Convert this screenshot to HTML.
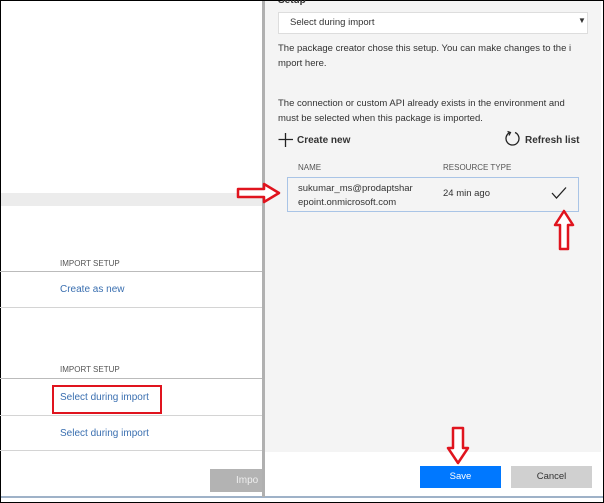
<!DOCTYPE html>
<html><head><style>
body{margin:0;width:604px;height:503px;overflow:hidden;background:#fff;font-family:"Liberation Sans",sans-serif;position:relative}
.a{position:absolute}
.t{position:absolute;font-size:10px;color:#333;white-space:nowrap}
.h{font-size:8px;color:#555}
.l{color:#3a6fb0;font-size:10px}
.hr{position:absolute;left:0;width:262px;height:1px;background:#d4d4d4}
</style></head><body>
<div class="a" style="left:0;top:0;border:1px solid #000;box-sizing:border-box;width:604px;height:503px"></div>
<div class="a" style="left:1px;top:193px;width:261px;height:13px;background:#ececec"></div>
<div class="t h" style="left:60px;top:259px">IMPORT SETUP</div>
<div class="hr" style="top:271px;background:#bbb"></div>
<div class="t l" style="left:60px;top:284px">Create as new</div>
<div class="hr" style="top:307px"></div>
<div class="t h" style="left:60px;top:365px">IMPORT SETUP</div>
<div class="hr" style="top:378px;background:#bbb"></div>
<div class="t l" style="left:60px;top:392px">Select during import</div>
<div class="a" style="left:52px;top:385px;width:110px;height:29px;border:2px solid #e0141e;box-sizing:border-box"></div>
<div class="hr" style="top:415px"></div>
<div class="t l" style="left:60px;top:428px">Select during import</div>
<div class="hr" style="top:450px"></div>
<div class="a" style="left:210px;top:469px;width:52px;height:23px;background:#b3b3b3;color:#eee;font-size:10px;line-height:23px;padding-left:26px;box-sizing:border-box">Impo</div>
<div class="a" style="left:1px;top:496px;width:602px;height:2px;background:#9fb2c8"></div>
<div class="a" style="left:262px;top:1px;width:3px;height:496px;background:#b0b0b0"></div>
<div class="a" style="left:265px;top:1px;width:336px;height:451px;background:#f4f4f4"></div>
<div class="a" style="left:265px;top:452px;width:336px;height:44px;background:#fff"></div>
<div class="t" style="left:278px;top:-5px;font-weight:bold;font-size:10px">Setup</div>
<div class="a" style="left:278px;top:12px;width:310px;height:22px;background:#fff;border:1px solid #ddd;box-sizing:border-box"></div>
<div class="t" style="left:290px;top:17px;font-size:9.5px">Select during import</div>
<div class="t" style="left:578px;top:16px;font-size:8px">▼</div>
<div class="t" style="left:278px;top:41px;font-size:9.5px;line-height:15px">The package creator chose this setup. You can make changes to the i<br>mport here.</div>
<div class="t" style="left:278px;top:96px;font-size:9.5px;line-height:15px">The connection or custom API already exists in the environment and<br>must be selected when this package is imported.</div>
<svg class="a" style="left:278px;top:132px" width="16" height="16"><path d="M7.5 1V15M0.5 7.5H15" stroke="#222" stroke-width="1.3"/></svg>
<div class="t" style="left:297px;top:135px;font-weight:bold;font-size:10px">Create new</div>
<svg class="a" style="left:504px;top:130px" width="18" height="18"><path d="M6 2.5A6.5 6.5 0 1 0 11 2.5" fill="none" stroke="#222" stroke-width="1.3"/><path d="M3.5 1.5L6.5 2.5 5 5.5" fill="none" stroke="#222" stroke-width="1.2"/></svg>
<div class="t" style="left:525px;top:135px;font-weight:bold;font-size:10px">Refresh list</div>
<div class="t h" style="left:298px;top:163px">NAME</div>
<div class="t h" style="left:443px;top:163px">RESOURCE TYPE</div>
<div class="a" style="left:287px;top:177px;width:292px;height:35px;border:1px solid #a9c4e6;background:#f4f4f4;box-sizing:border-box"></div>
<div class="t" style="left:298px;top:182px;font-size:9.5px;line-height:14px">sukumar_ms@prodaptshar<br>epoint.onmicrosoft.com</div>
<div class="t" style="left:443px;top:188px;font-size:9.5px">24 min ago</div>
<svg class="a" style="left:551px;top:186px" width="16" height="14"><path d="M1 7L5.5 12 15 1.5" fill="none" stroke="#222" stroke-width="1.3"/></svg>
<svg class="a" style="left:236px;top:182px" width="46" height="22"><path d="M2 7H28V2L43 11 28 20V15H2Z" fill="#fff" stroke="#e0141e" stroke-width="2.5" stroke-linejoin="round"/></svg>
<svg class="a" style="left:553px;top:209px" width="22" height="42"><path d="M11 2L20 16H15V40H7V16H2Z" fill="#fff" stroke="#e0141e" stroke-width="2.5" stroke-linejoin="round"/></svg>
<svg class="a" style="left:446px;top:426px" width="24" height="40"><path d="M7 2H17V22H22L12 37 2 22H7Z" fill="#fff" stroke="#e0141e" stroke-width="2.5" stroke-linejoin="round"/></svg>
<div class="a" style="left:420px;top:466px;width:81px;height:22px;background:#0078ff;color:#fff;font-size:9.5px;text-align:center;line-height:22px">Save</div>
<div class="a" style="left:511px;top:466px;width:81px;height:22px;background:#d0d0d0;color:#333;font-size:9.5px;text-align:center;line-height:22px">Cancel</div>
</body></html>
